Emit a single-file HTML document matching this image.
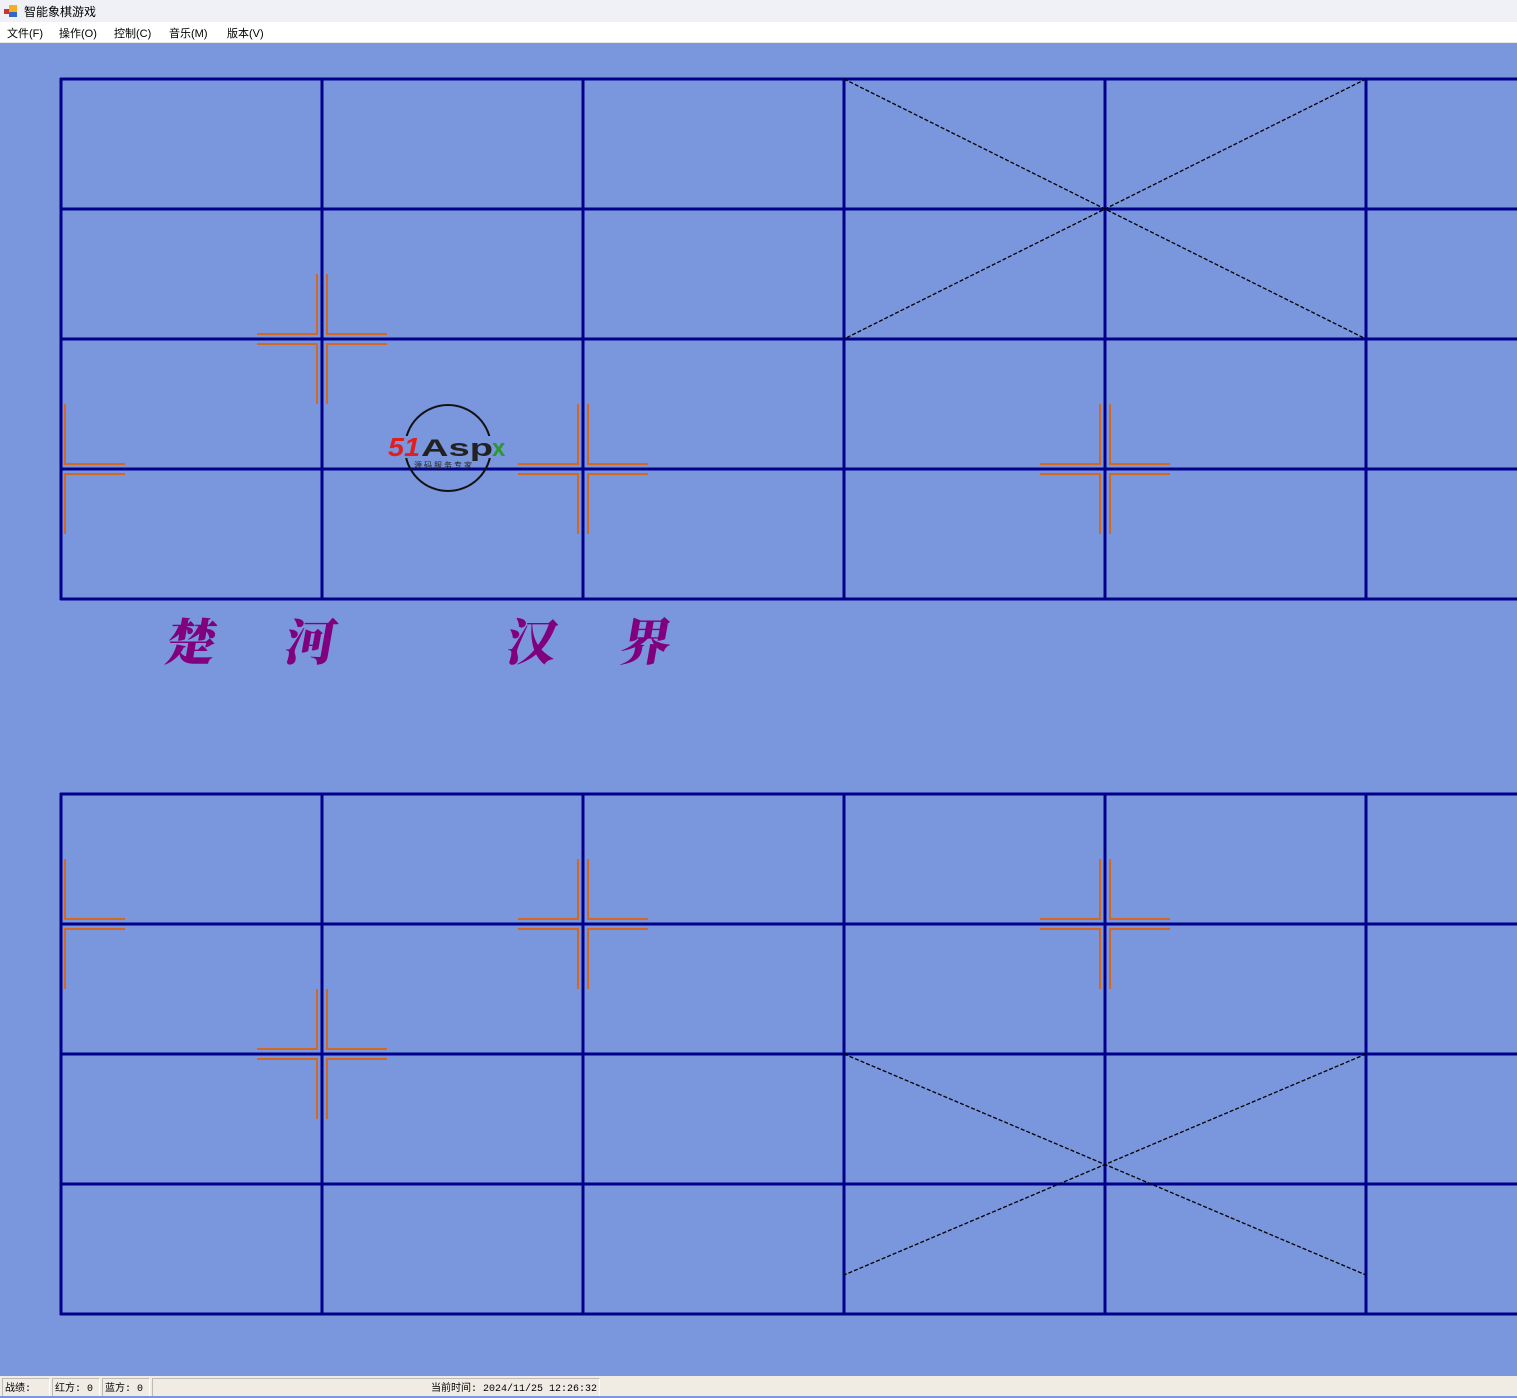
<!DOCTYPE html>
<html><head><meta charset="utf-8"><style>
html,body{margin:0;padding:0;width:1517px;height:1396px;overflow:hidden;background:#7a96dc;font-family:"Liberation Sans","Noto Sans CJK SC",sans-serif;}
#title{position:absolute;left:0;top:0;width:1517px;height:22px;background:#eff1f7;font-size:12px;}
#title span{position:absolute;left:24px;top:3px;}
#menu{position:absolute;left:0;top:22px;width:1517px;height:20px;background:#fff;font-size:11px;border-bottom:1px solid #e8e8e8;}
#menu span{position:absolute;top:3px;}
#status{position:absolute;left:0;top:1376px;width:1517px;height:20px;background:#f0ece4;font-size:10px;font-family:"Liberation Mono","Noto Sans CJK SC",monospace;}
#status div{position:absolute;top:2px;height:18px;border:1px solid #bbb;border-right-color:#fff;border-bottom:none;padding:3px 2px 0;box-sizing:border-box;line-height:16px}
svg{position:absolute;left:0;top:0}
</style></head><body>
<div id="title">
<svg width="18" height="18" style="left:3px;top:3px"><rect x="1" y="6" width="5" height="5" fill="#c33"/><rect x="6" y="2" width="8" height="7" fill="#f0b020"/><rect x="6" y="9" width="8" height="5" fill="#3366cc"/></svg>
<span>智能象棋游戏</span></div>
<div id="menu"><span style="left:7px">文件(F)</span><span style="left:59px">操作(O)</span><span style="left:114px">控制(C)</span><span style="left:169px">音乐(M)</span><span style="left:227px">版本(V)</span></div>
<svg width="1517" height="1396" style="pointer-events:none">
<g stroke="#00008b" stroke-width="3" fill="none">
<path d="M61 78V600M322 78V600M583 78V600M844 78V600M1105 78V600M1366 78V600
M60 79H1517M60 209H1517M60 339H1517M60 469H1517M60 599H1517"/>
<path d="M61 793V1315M322 793V1315M583 793V1315M844 793V1315M1105 793V1315M1366 793V1315
M60 794H1517M60 924H1517M60 1054H1517M60 1184H1517M60 1314H1517"/>
</g>
<g stroke="#000" stroke-width="1.3" stroke-dasharray="4,2" fill="none">
<path d="M844 79L1366 339M1366 79L844 339M844 1054L1366 1275M1366 1054L844 1275"/>
</g>
<g stroke="#d2691e" stroke-width="2" fill="none">
<path d="M257 334L317 334L317 274M387 334L327 334L327 274M257 344L317 344L317 404M387 344L327 344L327 404"/>
<path d="M518 464L578 464L578 404M648 464L588 464L588 404M518 474L578 474L578 534M648 474L588 474L588 534"/>
<path d="M1040 464L1100 464L1100 404M1170 464L1110 464L1110 404M1040 474L1100 474L1100 534M1170 474L1110 474L1110 534"/>
<path d="M125 464L65 464L65 404M125 474L65 474L65 534"/>
<path d="M125 919L65 919L65 859M125 929L65 929L65 989"/>
<path d="M518 919L578 919L578 859M648 919L588 919L588 859M518 929L578 929L578 989M648 929L588 929L588 989"/>
<path d="M1040 919L1100 919L1100 859M1170 919L1110 919L1110 859M1040 929L1100 929L1100 989M1170 929L1110 929L1110 989"/>
<path d="M257 1049L317 1049L317 989M387 1049L327 1049L327 989M257 1059L317 1059L317 1119M387 1059L327 1059L327 1119"/>
</g>
<g fill="#800080" font-family="'Noto Serif CJK SC',serif" font-weight="900" font-size="50">
<text x="165" y="660" transform="skewX(-10) translate(115,0)">楚</text>
<text x="284" y="660" transform="skewX(-10) translate(115,0)">河</text>
<text x="505" y="660" transform="skewX(-10) translate(115,0)">汉</text>
<text x="620" y="660" transform="skewX(-10) translate(115,0)">界</text>
</g>
<g>
<circle cx="448" cy="448" r="43" fill="none" stroke="#111" stroke-width="2"/>
<rect x="386" y="436" width="126" height="22" fill="#7a96dc"/>
<text x="388" y="456" font-family="Liberation Sans" font-weight="bold" font-style="italic" font-size="26" fill="#e02020" textLength="32" lengthAdjust="spacingAndGlyphs">51</text>
<text x="421" y="456" font-family="Liberation Sans" font-weight="bold" font-size="24" fill="#222" textLength="72" lengthAdjust="spacingAndGlyphs">Asp</text>
<text x="492" y="456" font-family="Liberation Sans" font-weight="bold" font-size="24" fill="#2a9a2a">x</text>
<text x="414" y="468" font-family="Noto Sans CJK SC" font-size="8" fill="#222" letter-spacing="2">源码服务专家</text>
</g>
</svg>
<div id="status">
<div style="left:2px;width:48px">战绩:</div>
<div style="left:52px;width:48px">红方: 0</div>
<div style="left:102px;width:48px">蓝方: 0</div>
<div style="left:152px;width:448px;text-align:right">当前时间: 2024/11/25 12:26:32</div>
</div>
</body></html>
